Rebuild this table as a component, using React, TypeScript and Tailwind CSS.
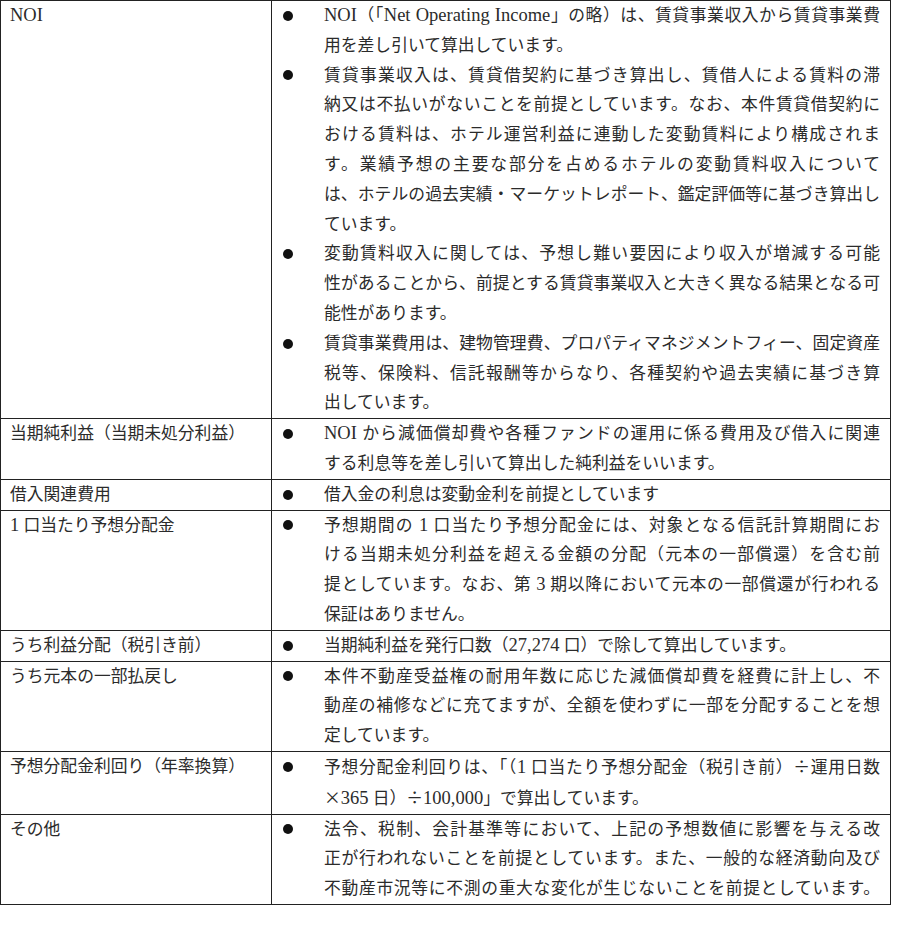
import React from "react";

type Item = { lines: string[]; justifyLast?: boolean };
type Row = { label: string; items: Item[] };

const ROWS: Row[] = [
  {
    label: "NOI",
    items: [
      {
        lines: [
          "NOI（「Net Operating Income」の略）は、賃貸事業収入から賃貸事業費",
          "用を差し引いて算出しています。",
        ],
      },
      {
        lines: [
          "賃貸事業収入は、賃貸借契約に基づき算出し、賃借人による賃料の滞",
          "納又は不払いがないことを前提としています。なお、本件賃貸借契約に",
          "おける賃料は、ホテル運営利益に連動した変動賃料により構成されま",
          "す。業績予想の主要な部分を占めるホテルの変動賃料収入について",
          "は、ホテルの過去実績・マーケットレポート、鑑定評価等に基づき算出し",
          "ています。",
        ],
      },
      {
        lines: [
          "変動賃料収入に関しては、予想し難い要因により収入が増減する可能",
          "性があることから、前提とする賃貸事業収入と大きく異なる結果となる可",
          "能性があります。",
        ],
      },
      {
        lines: [
          "賃貸事業費用は、建物管理費、プロパティマネジメントフィー、固定資産",
          "税等、保険料、信託報酬等からなり、各種契約や過去実績に基づき算",
          "出しています。",
        ],
      },
    ],
  },
  {
    label: "当期純利益（当期未処分利益）",
    items: [
      {
        lines: [
          "NOI から減価償却費や各種ファンドの運用に係る費用及び借入に関連",
          "する利息等を差し引いて算出した純利益をいいます。",
        ],
      },
    ],
  },
  {
    label: "借入関連費用",
    items: [{ lines: ["借入金の利息は変動金利を前提としています"] }],
  },
  {
    label: "1 口当たり予想分配金",
    items: [
      {
        lines: [
          "予想期間の 1 口当たり予想分配金には、対象となる信託計算期間にお",
          "ける当期未処分利益を超える金額の分配（元本の一部償還）を含む前",
          "提としています。なお、第 3 期以降において元本の一部償還が行われる",
          "保証はありません。",
        ],
      },
    ],
  },
  {
    label: "うち利益分配（税引き前）",
    items: [{ lines: ["当期純利益を発行口数（27,274 口）で除して算出しています。"] }],
  },
  {
    label: "うち元本の一部払戻し",
    items: [
      {
        lines: [
          "本件不動産受益権の耐用年数に応じた減価償却費を経費に計上し、不",
          "動産の補修などに充てますが、全額を使わずに一部を分配することを想",
          "定しています。",
        ],
      },
    ],
  },
  {
    label: "予想分配金利回り（年率換算）",
    items: [
      {
        lines: [
          "予想分配金利回りは、「（1 口当たり予想分配金（税引き前）÷運用日数",
          "×365 日）÷100,000」で算出しています。",
        ],
      },
    ],
  },
  {
    label: "その他",
    items: [
      {
        lines: [
          "法令、税制、会計基準等において、上記の予想数値に影響を与える改",
          "正が行われないことを前提としています。また、一般的な経済動向及び",
          "不動産市況等に不測の重大な変化が生じないことを前提としています。",
        ],
        justifyLast: true,
      },
    ],
  },
];

// Latin runs look a size larger in the source; × and ÷ are full-width there
const Rich: React.FC<{ text: string }> = ({ text }) => {
  const parts = text.split(/([A-Za-z0-9,]+(?: [A-Za-z]+)*|[×÷])/);
  return (
    <>
      {parts.map((p, i) => {
        if (!p) return null;
        if (p === "×" || p === "÷")
          return (
            <span key={i} className="font-['Noto_Sans_CJK_JP',sans-serif]">
              {p}
            </span>
          );
        if (/^[A-Za-z0-9,]/.test(p))
          return (
            <span key={i} className="text-[18.5px]">
              {p}
            </span>
          );
        return <React.Fragment key={i}>{p}</React.Fragment>;
      })}
    </>
  );
};

const Bullet: React.FC<{ item: Item }> = ({ item }) => (
  <div className="flex">
    {/* bullet mark */}
    <div className="w-[52px] shrink-0 h-[29.8px] flex items-center pl-[11px]">
      <span className="block w-[10px] h-[10px] rounded-full bg-[#111]" />
    </div>
    <div className="w-[556px]">
      {item.lines.map((line, i) => {
        const justify = i < item.lines.length - 1 || item.justifyLast;
        return (
          <div
            key={i}
            className={
              justify ? "text-justify [text-align-last:justify]" : "text-left"
            }
          >
            <Rich text={line} />
          </div>
        );
      })}
    </div>
  </div>
);

export default function App() {
  return (
    <div
      lang="ja"
      className="min-h-[937px] bg-white font-['Liberation_Serif','Noto_Sans_CJK_JP',serif] text-[16.8px] leading-[29.8px] text-[#2b2b2b]"
    >
      <div className="w-[891px] border border-[#222]">
        {ROWS.map((row, idx) => (
          <div
            key={idx}
            className={`flex ${idx > 0 ? "border-t border-[#222]" : ""}`}
          >
            <div className="w-[271px] shrink-0 border-r border-[#222] pl-[9px]">
              <Rich text={row.label} />
            </div>
            <div className="flex-1 pr-[10px]">
              {row.items.map((item, j) => (
                <Bullet key={j} item={item} />
              ))}
            </div>
          </div>
        ))}
      </div>
    </div>
  );
}
